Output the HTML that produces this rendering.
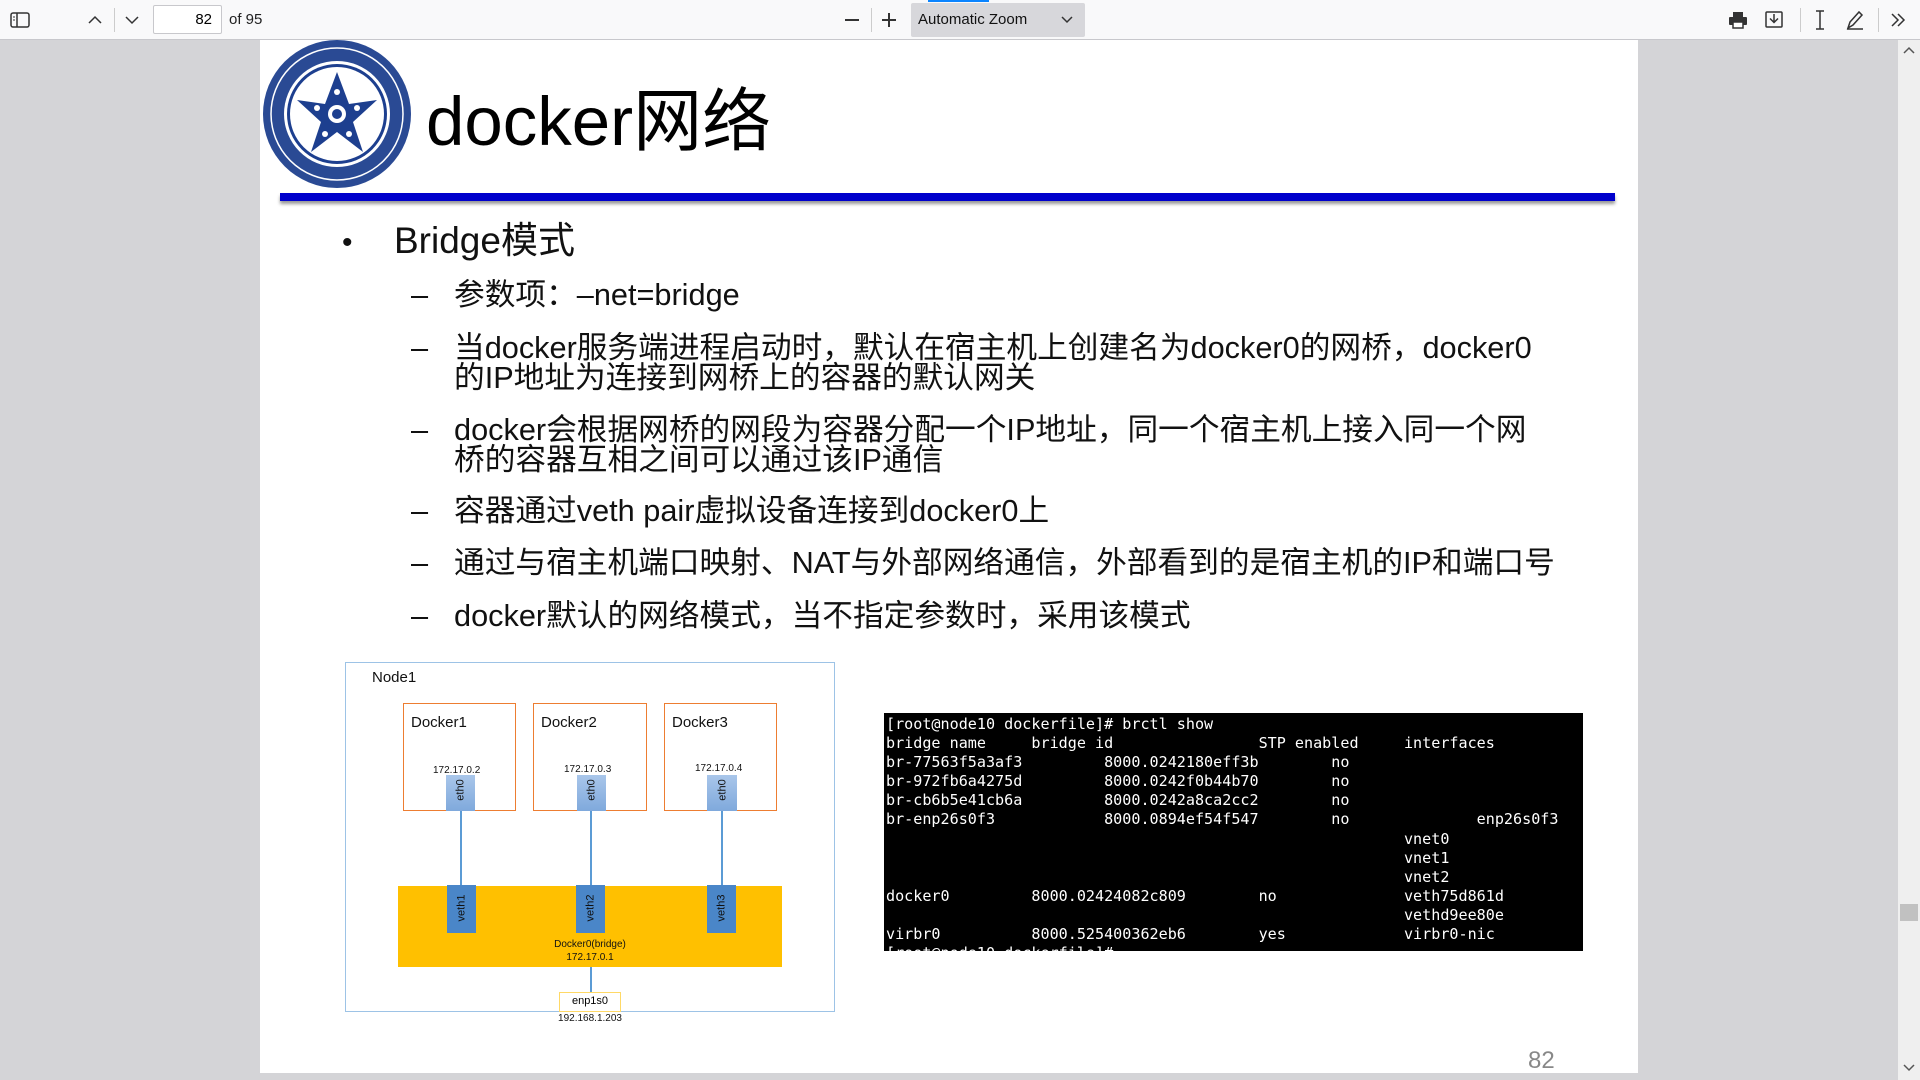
<!DOCTYPE html>
<html><head><meta charset="utf-8"><style>
*{margin:0;padding:0;box-sizing:border-box}
body{width:1920px;height:1080px;overflow:hidden;background:#d4d4d7;font-family:"Liberation Sans","Noto Sans CJK SC",sans-serif;position:relative}
.tb{position:absolute;left:0;top:0;width:1920px;height:40px;background:#f9f9fa;border-bottom:1px solid #c8c8cc}
.a{position:absolute}
.page{position:absolute;left:260px;top:40px;width:1378px;height:1033px;background:#fff}
.t{position:absolute;white-space:nowrap;color:#111}
.dash{font-size:30.7px;line-height:30px}
pre{font-family:"DejaVu Sans Mono","Liberation Mono",monospace;font-size:15.1px;line-height:19.1px;color:#fff}
</style></head><body>
<div class="tb">
 <div class="a" style="left:928px;top:0;width:61px;height:2px;background:#0a84ff"></div>
 <svg class="a" style="left:10px;top:11px" width="20" height="18"><rect x="1" y="2" width="18" height="14" rx="2" fill="none" stroke="#333" stroke-width="1.5"/><line x1="7" y1="2" x2="7" y2="16" stroke="#333" stroke-width="1.5"/><line x1="3" y1="6" x2="5" y2="6" stroke="#333"/><line x1="3" y1="9" x2="5" y2="9" stroke="#333"/></svg>
 <svg class="a" style="left:87px;top:13px" width="16" height="14"><path d="M2 10 L8 4 L14 10" fill="none" stroke="#333" stroke-width="1.5"/></svg>
 <div class="a" style="left:114px;top:8px;width:1px;height:24px;background:#ccc"></div>
 <svg class="a" style="left:124px;top:13px" width="16" height="14"><path d="M2 4 L8 10 L14 4" fill="none" stroke="#333" stroke-width="1.5"/></svg>
 <div class="a" style="left:153px;top:5px;width:69px;height:29px;background:#fff;border:1px solid #c8c8cc;border-radius:2px;font-size:15px;text-align:right;padding:5px 9px 0 0">82</div>
 <div class="a" style="left:229px;top:11px;font-size:15px;color:#222">of 95</div>
 <div class="a" style="left:845px;top:19px;width:14px;height:1.5px;background:#333"></div>
 <div class="a" style="left:871px;top:8px;width:1px;height:24px;background:#ccc"></div>
 <div class="a" style="left:882px;top:19px;width:14px;height:1.5px;background:#333"></div>
 <div class="a" style="left:888px;top:13px;width:1.5px;height:14px;background:#333"></div>
 <div class="a" style="left:911px;top:3px;width:174px;height:34px;background:#d7d7db;border-radius:2px;font-size:15px;padding:8px 0 0 7px;color:#111">Automatic Zoom</div>
 <svg class="a" style="left:1061px;top:15px" width="12" height="10"><path d="M1 2 L6 7 L11 2" fill="none" stroke="#333" stroke-width="1.5"/></svg>
 <svg class="a" style="left:1728px;top:10px" width="20" height="20"><rect x="5" y="2" width="10" height="5" fill="#333"/><rect x="1" y="7" width="18" height="8" rx="1" fill="#333"/><rect x="5" y="12" width="10" height="6" fill="#fff" stroke="#333" stroke-width="1.5"/></svg>
 <svg class="a" style="left:1764px;top:9px" width="20" height="20"><rect x="2" y="3" width="16" height="15" rx="1" fill="none" stroke="#333" stroke-width="1.5"/><path d="M10 5 V13 M6 9.5 L10 13.5 L14 9.5" fill="none" stroke="#333" stroke-width="1.5"/></svg>
 <div class="a" style="left:1800px;top:8px;width:1px;height:24px;background:#ccc"></div>
 <svg class="a" style="left:1812px;top:9px" width="16" height="22"><path d="M4 2 H12 M8 2 V20 M4 20 H12" stroke="#333" stroke-width="1.5" fill="none"/></svg>
 <svg class="a" style="left:1845px;top:9px" width="20" height="22"><path d="M3 19 L5 13 L14 3 L17 6 L8 16 Z M2 20 H18" stroke="#333" stroke-width="1.5" fill="none"/></svg>
 <div class="a" style="left:1878px;top:8px;width:1px;height:24px;background:#ccc"></div>
 <svg class="a" style="left:1889px;top:12px" width="18" height="16"><path d="M3 2 L9 8 L3 14 M9 2 L15 8 L9 14" stroke="#333" stroke-width="1.5" fill="none"/></svg>
</div>
<div class="a" style="left:1898px;top:40px;width:22px;height:1040px;background:#efefef"></div>
<svg class="a" style="left:1903px;top:45px" width="12" height="10"><path d="M1 8 L6 3 L11 8" stroke="#555" stroke-width="1.5" fill="none"/></svg>
<svg class="a" style="left:1903px;top:1063px" width="12" height="10"><path d="M1 2 L6 7 L11 2" stroke="#555" stroke-width="1.5" fill="none"/></svg>
<div class="a" style="left:1900px;top:904px;width:18px;height:17px;background:#c1c1c1"></div>

<div class="page">
 <svg class="a" style="left:1px;top:0px" width="152" height="152" viewBox="0 0 152 152">
  <circle cx="76" cy="74" r="74" fill="#2a4a94"/>
  <circle cx="76" cy="74" r="66" fill="none" stroke="#fff" stroke-width="1.5"/>
  <circle cx="76" cy="74" r="53" fill="#fff"/>
  <circle cx="76" cy="74" r="50" fill="#1d3f8f"/>
  <circle cx="76" cy="74" r="47" fill="#fff"/>
  <g fill="#1d3f8f" transform="translate(76 74)">
   <path d="M0 -42 L12 -10 L40 -14 L16 8 L26 38 L0 18 L-26 38 L-16 8 L-40 -14 L-12 -10 Z"/>
  </g>
  <circle cx="76" cy="74" r="9" fill="#fff"/><circle cx="76" cy="74" r="5" fill="#1d3f8f"/>
  <g fill="#fff"><circle cx="76" cy="52" r="3"/><circle cx="96" cy="68" r="3"/><circle cx="56" cy="68" r="3"/><circle cx="64" cy="94" r="3"/><circle cx="88" cy="94" r="3"/></g>
 </svg>
 <div class="t" style="left:166px;top:46px;font-size:69px;line-height:71px;color:#000">docker网络</div>
 <div class="a" style="left:20px;top:153px;width:1335px;height:8px;background:#0000cc;box-shadow:0 3px 3px #999"></div>
 <div class="t" style="left:82px;top:186px;font-size:30px">•</div>
 <div class="t" style="left:134px;top:170px;font-size:37px">Bridge模式</div>
 <div class="t dash" style="left:151px;top:240px">–</div><div class="t dash" style="left:194px;top:240px">参数项：–net=bridge</div>
 <div class="t dash" style="left:151px;top:293px">–</div><div class="t dash" style="left:194px;top:293px">当docker服务端进程启动时，默认在宿主机上创建名为docker0的网桥，docker0<br>的IP地址为连接到网桥上的容器的默认网关</div>
 <div class="t dash" style="left:151px;top:375px">–</div><div class="t dash" style="left:194px;top:375px">docker会根据网桥的网段为容器分配一个IP地址，同一个宿主机上接入同一个网<br>桥的容器互相之间可以通过该IP通信</div>
 <div class="t dash" style="left:151px;top:456px">–</div><div class="t dash" style="left:194px;top:456px">容器通过veth pair虚拟设备连接到docker0上</div>
 <div class="t dash" style="left:151px;top:508px">–</div><div class="t dash" style="left:194px;top:508px">通过与宿主机端口映射、NAT与外部网络通信，外部看到的是宿主机的IP和端口号</div>
 <div class="t dash" style="left:151px;top:561px">–</div><div class="t dash" style="left:194px;top:561px">docker默认的网络模式，当不指定参数时，采用该模式</div>

 <!-- diagram -->
 <div class="a" style="left:85px;top:622px;width:490px;height:350px;border:1.5px solid #9dc3e6"></div>
 <div class="t" style="left:112px;top:629px;font-size:15px">Node1</div>
 <div class="a" style="left:143px;top:663px;width:113px;height:108px;border:1.5px solid #ed7d31"></div>
 <div class="a" style="left:273px;top:663px;width:114px;height:108px;border:1.5px solid #ed7d31"></div>
 <div class="a" style="left:404px;top:663px;width:113px;height:108px;border:1.5px solid #ed7d31"></div>
 <div class="t" style="left:151px;top:674px;font-size:15px">Docker1</div>
 <div class="t" style="left:281px;top:674px;font-size:15px">Docker2</div>
 <div class="t" style="left:412px;top:674px;font-size:15px">Docker3</div>
 <div class="t" style="left:173px;top:725px;font-size:10px">172.17.0.2</div>
 <div class="t" style="left:304px;top:724px;font-size:10px">172.17.0.3</div>
 <div class="t" style="left:435px;top:723px;font-size:10px">172.17.0.4</div>
 <div class="a" style="left:138px;top:846px;width:384px;height:81px;background:#ffc000"></div>
 <div class="a" style="left:200px;top:771px;width:1.5px;height:74px;background:#5b9bd5"></div>
 <div class="a" style="left:330px;top:771px;width:1.5px;height:74px;background:#5b9bd5"></div>
 <div class="a" style="left:461px;top:771px;width:1.5px;height:74px;background:#5b9bd5"></div>
 <div class="a" style="left:330px;top:927px;width:1.5px;height:25px;background:#5b9bd5"></div>
 <div class="a" style="left:186px;top:735px;width:29px;height:36px;background:linear-gradient(#a9c6ea,#7fa9dc)"></div>
 <div class="a" style="left:317px;top:735px;width:29px;height:36px;background:linear-gradient(#a9c6ea,#7fa9dc)"></div>
 <div class="a" style="left:447px;top:735px;width:30px;height:36px;background:linear-gradient(#a9c6ea,#7fa9dc)"></div>
 <div class="t" style="left:186px;top:744px;width:29px;font-size:11px;transform:rotate(-90deg);text-align:center">eth0</div>
 <div class="t" style="left:317px;top:744px;width:29px;font-size:11px;transform:rotate(-90deg);text-align:center">eth0</div>
 <div class="t" style="left:448px;top:744px;width:29px;font-size:11px;transform:rotate(-90deg);text-align:center">eth0</div>
 <div class="a" style="left:187px;top:845px;width:29px;height:48px;background:#4a86c8"></div>
 <div class="a" style="left:316px;top:845px;width:29px;height:48px;background:#4a86c8"></div>
 <div class="a" style="left:447px;top:845px;width:29px;height:48px;background:#4a86c8"></div>
 <div class="t" style="left:177px;top:862px;width:49px;font-size:11px;transform:rotate(-90deg);text-align:center">veth1</div>
 <div class="t" style="left:306px;top:862px;width:49px;font-size:11px;transform:rotate(-90deg);text-align:center">veth2</div>
 <div class="t" style="left:437px;top:862px;width:49px;font-size:11px;transform:rotate(-90deg);text-align:center">veth3</div>
 <div class="t" style="left:280px;top:898px;width:100px;text-align:center;font-size:10px;line-height:13px">Docker0(bridge)<br>172.17.0.1</div>
 <div class="a" style="left:299px;top:952px;width:62px;height:20px;border:1.5px solid #ffd966;background:#fff;font-size:11px;text-align:center;line-height:17px">enp1s0</div>
 <div class="t" style="left:280px;top:973px;width:100px;text-align:center;font-size:10px">192.168.1.203</div>

 <div class="a" style="left:624px;top:673px;width:699px;height:238px;background:#000;overflow:hidden;padding:2px 0 0 2px">
<pre>[root@node10 dockerfile]# brctl show
bridge name     bridge id                STP enabled     interfaces
br-77563f5a3af3         8000.0242180eff3b        no
br-972fb6a4275d         8000.0242f0b44b70        no
br-cb6b5e41cb6a         8000.0242a8ca2cc2        no
br-enp26s0f3            8000.0894ef54f547        no              enp26s0f3
                                                         vnet0
                                                         vnet1
                                                         vnet2
docker0         8000.02424082c809        no              veth75d861d
                                                         vethd9ee80e
virbr0          8000.525400362eb6        yes             virbr0-nic
[root@node10 dockerfile]# </pre>
 </div>
 <div class="t" style="left:1268px;top:1007px;font-size:24px;color:#888">82</div>
</div>
</body></html>
